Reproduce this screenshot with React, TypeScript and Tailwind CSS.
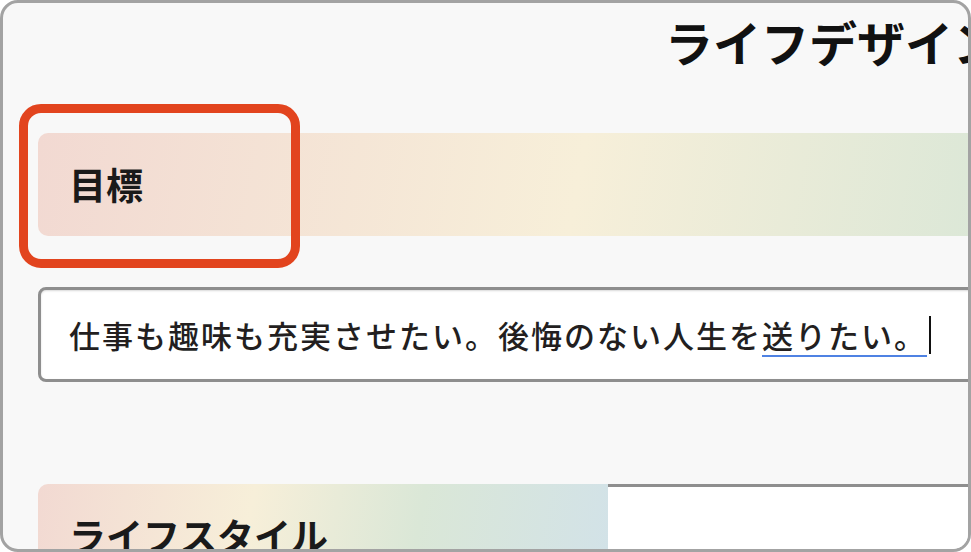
import React from "react";

const barGradient =
  "bg-[linear-gradient(100deg,#f2d9d2_0%,#f7efd9_37%,#dae7d7_66%,#d2e2e8_100%)]";

export default function App() {
  return (
    <div className="w-[971px] h-[552px] bg-white font-['Noto_Sans_CJK_JP','Noto_Sans',sans-serif]">
      <div className="relative w-[971px] h-[552px] rounded-[18px] border-[3px] border-[#a3a3a3] bg-[#f8f8f8] overflow-hidden">
        <div className="flex flex-col w-[1500px] pl-[35px]">
          {/* page title, centred on the full sheet */}
          <h1 className="pt-[13px] pl-[627px] text-[48px] leading-[50px] font-bold text-[#111] whitespace-nowrap">
            ライフデザインシート
          </h1>

          {/* 目標 */}
          <div
            className={`mt-[67px] h-[103px] rounded-l-[10px] flex items-center pl-[31px] ${barGradient}`}
          >
            <span className="text-[37px] leading-none font-bold text-[#1a1a1a]">
              目標
            </span>
          </div>

          <div className="mt-[51px] h-[95px] rounded-[8px] border-[3px] border-[#8e8e8e] bg-white shadow-[inset_0_1px_2px_rgba(0,0,0,0.15)] flex items-center pl-[28px]">
            <span className="text-[31px] leading-none font-medium tracking-[2px] text-[#231f1f] whitespace-nowrap">
              仕事も趣味も充実させたい。後悔のない人生を
              <span className="underline decoration-[#4f82e3] decoration-2 underline-offset-[7px]">
                送りたい。
              </span>
            </span>
            <span className="inline-block w-[2px] h-[38px] bg-[#111] ml-[2px]" />
          </div>

          {/* ライフスタイル */}
          <div className="mt-[102px] flex">
            <div
              className={`w-[570px] h-[103px] rounded-tl-[10px] flex items-center pl-[31px] ${barGradient}`}
            >
              <span className="text-[37px] leading-none font-bold text-[#1a1a1a]">
                ライフスタイル
              </span>
            </div>
            <div className="flex-1 h-[103px] bg-white border-t-[3px] border-[#8e8e8e]" />
          </div>
        </div>

        {/* highlight around the 目標 label */}
        <div className="absolute left-[16px] top-[101px] w-[281px] h-[164px] rounded-[22px] border-[9px] border-[#e2441e]" />
      </div>
    </div>
  );
}
